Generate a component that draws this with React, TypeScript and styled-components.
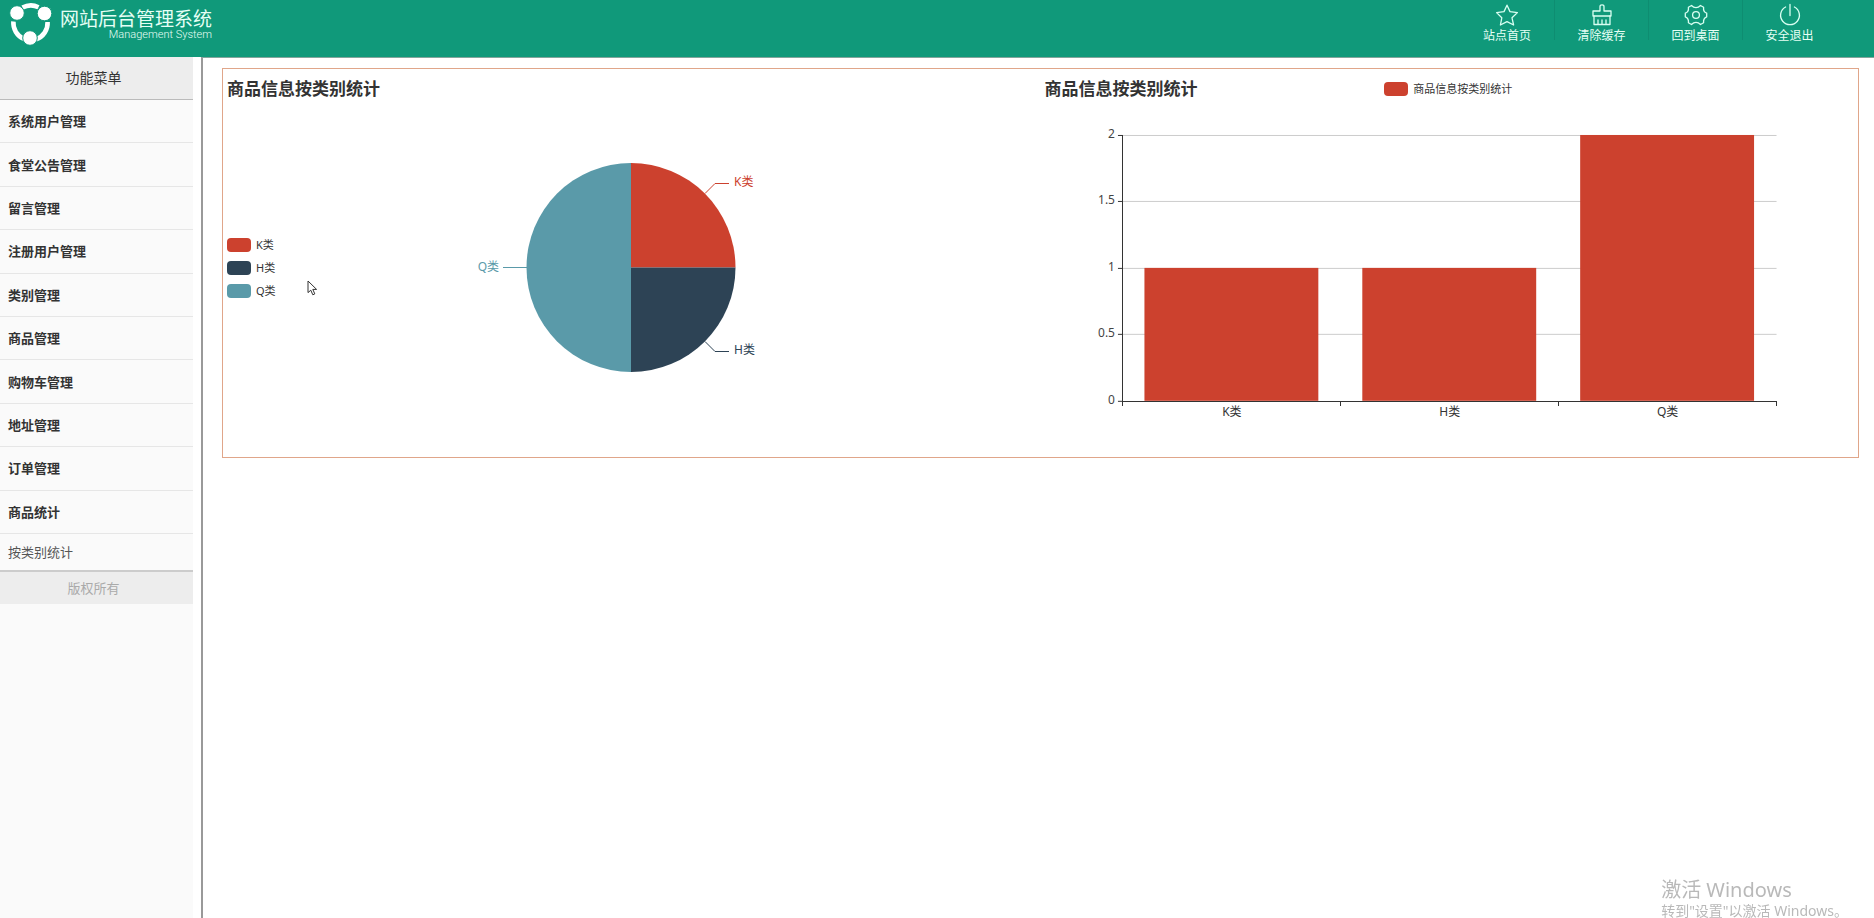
import React from "react";
import styled, { createGlobalStyle } from "styled-components";

const GlobalStyle = createGlobalStyle`
  *, *::before, *::after { box-sizing: border-box; }
  body {
    margin: 0;
    background: #fff;
    color: #333;
    font-family: "Noto Sans", "Noto Sans CJK SC", sans-serif;
    font-size: 13px;
  }
  a { color: inherit; text-decoration: none; }
`;

const RED = "#cc412e";
const NAVY = "#2d4355";
const TEAL = "#5a9aa9";

const Page = styled.div`
  display: flex;
  flex-direction: column;
  min-height: 100vh;
`;

const Header = styled.header`
  display: flex;
  justify-content: space-between;
  height: 57px;
  padding: 0 38px 0 9px;
  background: #10997a;
  color: #e6fff5;
`;

const Brand = styled.a`
  display: flex;
  gap: 8px;
  padding-top: 3px;
`;

const BrandText = styled.span`
  display: flex;
  flex-direction: column;
  align-items: flex-end;
  padding-top: 3px;
`;

const BrandName = styled.span`
  font-family: "Noto Sans CJK SC", sans-serif;
  font-size: 19px;
  line-height: 24px;
`;

const BrandSub = styled.span`
  font-family: Roboto, sans-serif;
  font-size: 11px;
  font-weight: 300;
  line-height: 10px;
`;

const TopNav = styled.nav`
  display: flex;
  height: 40px;
`;

const TopLink = styled.a`
  display: flex;
  flex-direction: column;
  align-items: center;
  width: 94px;
  padding-top: 3px;
  font-size: 12px;
  line-height: 17px;

  & + & { border-left: 1px solid #0e8d71; }
  & > svg { flex-shrink: 0; }
`;

const Body = styled.div`
  display: flex;
  flex: 1;
`;

const Sidebar = styled.aside`
  width: 193px;
  flex-shrink: 0;
  background: #fafafa;
`;

const MenuTitle = styled.h2`
  height: 43px;
  margin: 0;
  padding-right: 6px;
  border-bottom: 1px solid #bbb;
  background: #ededed;
  font-size: 14px;
  font-weight: 400;
  line-height: 41px;
  text-align: center;
`;

const Menu = styled.nav`
  display: grid;
  grid-auto-rows: 1fr;
  height: 434px;
`;

const MenuItem = styled.a`
  display: flex;
  align-items: center;
  padding: 0 0 1px 8px;
  border-bottom: 1px solid #e6e6e6;
  font-weight: 700;
`;

const SubItem = styled.a`
  display: block;
  padding-left: 8px;
  color: #555;
  line-height: 36px;
`;

const Copyright = styled.footer`
  padding-right: 6px;
  border-top: 2px solid #ccc;
  background: #ededed;
  color: #aaa;
  line-height: 32px;
  text-align: center;
`;

const Main = styled.main`
  flex: 1;
  min-width: 0;
  margin-left: 8px;
  padding: 10px 15px 0 19px;
  border-top: 1px solid #84a59c;
  border-left: 2px solid #999;
`;

const Panel = styled.section`
  display: grid;
  grid-template-columns: 1fr 1fr;
  border: 1px solid #e0a68a;
`;

const Chart = styled.section`
  min-width: 0;
`;

const ChartHead = styled.header`
  display: grid;
  grid-template-columns: 1fr auto 1fr;
  align-items: center;
  height: 40px;
  padding: 0 6px 0 4px;
`;

const ChartTitle = styled.h3`
  margin: 0;
  font-size: 17px;
  line-height: 24px;
`;

const PieBody = styled.div`
  display: grid;
  grid-template-columns: 1fr 320px 1fr;
  align-items: center;
  height: 318px;
  padding: 0 6px 0 4px;
`;

const Legend = styled.ul`
  display: flex;
  flex-direction: column;
  gap: 5px;
  margin: 0;
  padding: 0;
  list-style: none;
`;

const LegendItem = styled.li`
  display: flex;
  align-items: center;
  gap: 5px;
  font-size: 11px;
  line-height: 18px;
`;

const Swatch = styled.span<{ $color: string }>`
  width: 24px;
  height: 14px;
  border-radius: 4px;
  background: ${(p) => p.$color};
`;

const Drawing = styled.svg`
  display: block;
  width: 100%;
  height: auto;
  font-size: 12px;
`;

const Notice = styled.aside`
  position: fixed;
  right: 26px;
  bottom: 0;
  color: #b9b9b9;
  pointer-events: none;
`;

const NoticeTitle = styled.div`
  font-size: 20px;
  line-height: 28px;
`;

const NoticeText = styled.div`
  font-size: 14px;
  line-height: 14px;
`;

const Pointer = styled.svg`
  position: absolute;
  left: 307px;
  top: 280px;
  pointer-events: none;
`;

const Logo = () => (
  <svg width="43" height="43" viewBox="0 0 43 43" aria-hidden="true">
    <g fill="none" stroke="#fff" strokeWidth="4.6">
      <path d="M13.5 4.6 A17.5 17.5 0 0 1 29.5 4.2" />
      <path d="M38.6 19 A17.5 17.5 0 0 1 27 36.4" />
      <path d="M4.4 18.5 A17.5 17.5 0 0 0 15 36" />
    </g>
    <g fill="#fff" stroke="#10997a" strokeWidth="1">
      <circle cx="8" cy="10" r="7.3" />
      <circle cx="35.5" cy="10.5" r="7.3" />
      <circle cx="21" cy="35" r="7.3" />
    </g>
  </svg>
);

const iconPaths: Record<string, React.ReactNode> = {
  star: <path d="M12 2.2 L15 8.6 L22.4 9.6 L17 14.8 L18.6 22 L12 18.6 L5.4 22 L6.8 14.8 L1.6 9.6 L9 8.6 Z" />,
  brush: (
    <>
      <path d="M10 8 V3.5 Q10 1.8 12 1.8 Q14 1.8 14 3.5 V8 H21 V13 H3 V8 Z" />
      <path d="M4 13 V21.5 H20 V13 M8 17 V21.5 M12 17 V21.5 M16 17 V21.5" />
    </>
  ),
  gear: (
    <>
      <path d="M7.5 2.5 Q9.5 4.6 12 4.6 Q14.5 4.6 16.5 2.5 L19.6 4.3 Q19 8.8 22.7 10.2 V13.8 Q19 15.2 19.6 19.7 L16.5 21.5 Q14.5 19.4 12 19.4 Q9.5 19.4 7.5 21.5 L4.4 19.7 Q5 15.2 1.3 13.8 V10.2 Q5 8.8 4.4 4.3 Z" />
      <circle cx="12" cy="12" r="3.4" />
    </>
  ),
  power: <path d="M12 1.5 V12.5 M7.6 4 A9.4 9.4 0 1 0 16.4 4" />,
};

const TopIcon = ({ name }: { name: string }) => (
  <svg
    width="24"
    height="24"
    viewBox="0 0 24 24"
    fill="none"
    stroke="#d9fff2"
    strokeWidth="1.3"
    strokeLinejoin="round"
    strokeLinecap="round"
    aria-hidden="true"
  >
    {iconPaths[name]}
  </svg>
);

const topLinks = [
  { icon: "star", label: "站点首页" },
  { icon: "brush", label: "清除缓存" },
  { icon: "gear", label: "回到桌面" },
  { icon: "power", label: "安全退出" },
];

const menuItems = [
  "系统用户管理",
  "食堂公告管理",
  "留言管理",
  "注册用户管理",
  "类别管理",
  "商品管理",
  "购物车管理",
  "地址管理",
  "订单管理",
  "商品统计",
];

const categories = [
  { name: "K类", value: 1, color: RED },
  { name: "H类", value: 1, color: NAVY },
  { name: "Q类", value: 2, color: TEAL },
];

const PieChart = () => (
  <Drawing viewBox="0 0 320 260" role="img" aria-label="商品信息按类别统计">
    <path d="M160 129.5 V25 A104.5 104.5 0 0 1 264.5 129.5 Z" fill={RED} />
    <path d="M160 129.5 H264.5 A104.5 104.5 0 0 1 160 234 Z" fill={NAVY} />
    <path d="M160 129.5 V234 A104.5 104.5 0 0 1 160 25 Z" fill={TEAL} />
    <g fill="none">
      <path d="M234 55.5 L244 45.5 H258" stroke={RED} />
      <path d="M234 203.5 L244 213.5 H258" stroke={NAVY} />
      <path d="M56 129.5 H32" stroke={TEAL} />
    </g>
    <text x="263" y="48" fill={RED}>K类</text>
    <text x="263" y="216" fill={NAVY}>H类</text>
    <text x="28" y="133" textAnchor="end" fill={TEAL}>Q类</text>
  </Drawing>
);

const AXIS_LEFT = 82;
const AXIS_RIGHT = 736;
const AXIS_BOTTOM = 292;
const UNIT = 133;
const BAND = 218;
const BAR = 174;

const BarChart = () => (
  <Drawing viewBox="0 0 818 348" role="img" aria-label="商品信息按类别统计">
    {[0, 0.5, 1, 1.5, 2].map((v) => {
      const y = Math.floor(AXIS_BOTTOM - v * UNIT) + 0.5;
      return (
        <g key={v}>
          {v > 0 && <path d={`M${AXIS_LEFT} ${y} H${AXIS_RIGHT}`} stroke="#ccc" />}
          <path d={`M${AXIS_LEFT - 5} ${y} H${AXIS_LEFT}`} stroke="#333" />
          <text x={AXIS_LEFT - 8} y={y + 3} textAnchor="end" fill="#444">{v}</text>
        </g>
      );
    })}
    {categories.map((c, i) => (
      <g key={c.name}>
        <rect
          x={AXIS_LEFT + i * BAND + (BAND - BAR) / 2 - 0.5}
          y={AXIS_BOTTOM - c.value * UNIT}
          width={BAR}
          height={c.value * UNIT}
          fill={RED}
        />
        <text x={AXIS_LEFT + (i + 0.5) * BAND} y="307" textAnchor="middle" fill="#333">{c.name}</text>
      </g>
    ))}
    <g stroke="#333" shapeRendering="crispEdges">
      <path d={`M${AXIS_LEFT} 26 V${AXIS_BOTTOM} M${AXIS_LEFT} ${AXIS_BOTTOM + 0.5} H${AXIS_RIGHT}`} />
      {[0, 1, 2, 3].map((i) => (
        <path key={i} d={`M${AXIS_LEFT + i * BAND} ${AXIS_BOTTOM} v5`} />
      ))}
    </g>
  </Drawing>
);

export default function App() {
  return (
    <Page>
      <GlobalStyle />
      <Header>
        <Brand href="#">
          <Logo />
          <BrandText>
            <BrandName>网站后台管理系统</BrandName>
            <BrandSub>Management System</BrandSub>
          </BrandText>
        </Brand>
        <TopNav>
          {topLinks.map((l) => (
            <TopLink href="#" key={l.label}>
              <TopIcon name={l.icon} />
              {l.label}
            </TopLink>
          ))}
        </TopNav>
      </Header>
      <Body>
        <Sidebar>
          <MenuTitle>功能菜单</MenuTitle>
          <Menu>
            {menuItems.map((m) => (
              <MenuItem href="#" key={m}>{m}</MenuItem>
            ))}
          </Menu>
          <SubItem href="#">按类别统计</SubItem>
          <Copyright>版权所有</Copyright>
        </Sidebar>
        <Main>
          <Panel>
            <Chart>
              <ChartHead>
                <ChartTitle>商品信息按类别统计</ChartTitle>
              </ChartHead>
              <PieBody>
                <Legend>
                  {categories.map((c) => (
                    <LegendItem key={c.name}>
                      <Swatch $color={c.color} />
                      {c.name}
                    </LegendItem>
                  ))}
                </Legend>
                <PieChart />
              </PieBody>
            </Chart>
            <Chart>
              <ChartHead>
                <ChartTitle>商品信息按类别统计</ChartTitle>
                <Legend>
                  <LegendItem>
                    <Swatch $color={RED} />
                    商品信息按类别统计
                  </LegendItem>
                </Legend>
              </ChartHead>
              <BarChart />
            </Chart>
          </Panel>
        </Main>
      </Body>
      <Notice>
        <NoticeTitle>激活 Windows</NoticeTitle>
        <NoticeText>转到"设置"以激活 Windows。</NoticeText>
      </Notice>
      <Pointer width="11" height="16" viewBox="0 0 11 16" aria-hidden="true">
        <path d="M1 1 V12.6 L3.8 10.2 L5.8 14.8 L7.8 13.9 L5.8 9.4 H9.6 Z" fill="#fff" stroke="#333" />
      </Pointer>
    </Page>
  );
}
